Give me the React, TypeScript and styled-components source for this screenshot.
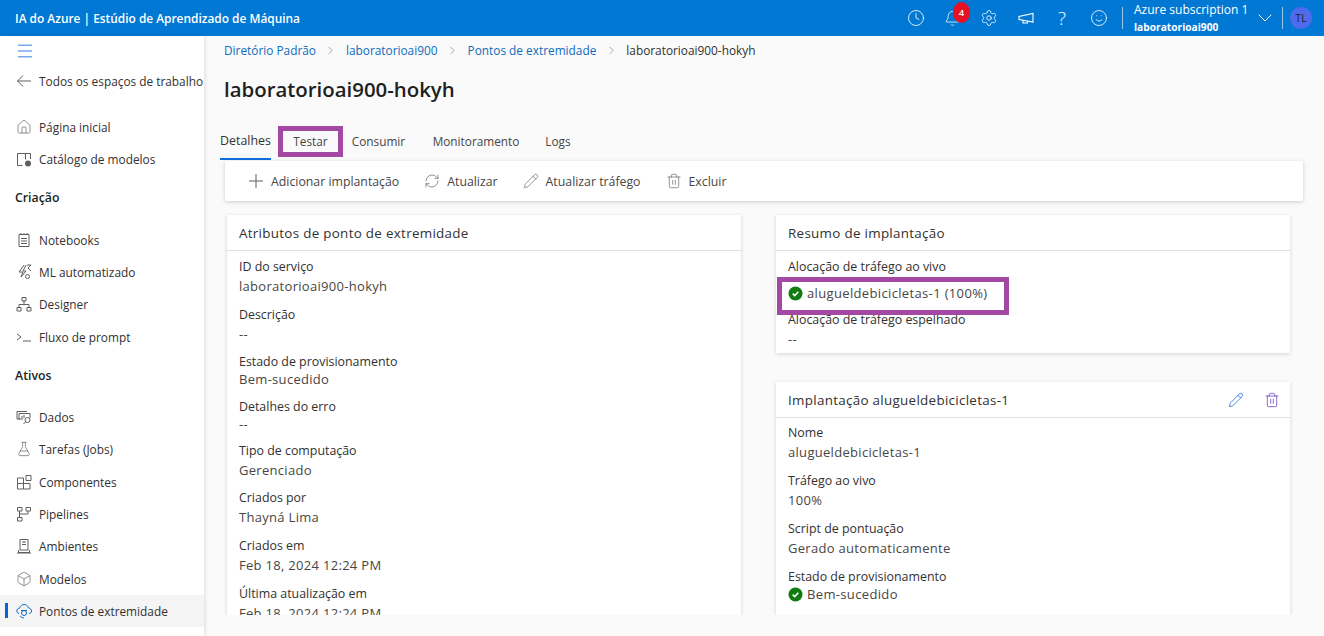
import type { ReactNode } from 'react';
import styled, { createGlobalStyle } from 'styled-components';
import { Bell, ChevronDown, ChevronRight, Clock, Pencil, RefreshCw, Settings, Smile, Trash2, Menu, Home, Box, FlaskConical } from 'lucide-react';

const GlobalStyle = createGlobalStyle`
    html, body {
        margin: 0;
        padding: 0;
        background: #fafafa;
    }
    body {
        font-family: "Open Sans", "Noto Sans", "Liberation Sans", sans-serif;
        font-size: 12px;
        color: #323130;
    }
`;

const Glyph = ({ children }: { children: ReactNode }) => (
    <svg width="16" height="16" viewBox="0 0 16 16" fill="none" stroke="#605e5c" strokeWidth="1">
        {children}
    </svg>
);

const BackIcon = () => (
    <Glyph>
        <path d="M15 8H1.500M7 2.500 1.500 8 7 13.500" />
    </Glyph>
);

const PlusIcon = () => (
    <Glyph>
        <path d="M8 1v14M1 8h14" />
    </Glyph>
);

const MegaphoneIcon = () => (
    <svg width="16" height="16" viewBox="0 0 16 16" fill="none" stroke="#fff" strokeWidth="1.100">
        <path d="M1 6.500v3l14 2.500V3.500zM5 10.500V13h4.500v-1.500" />
    </svg>
);

const CatalogIcon = () => (
    <svg width="16" height="16" viewBox="0 0 16 16" fill="none" stroke="#605e5c">
        <path d="M6.500 14.500h-5v-12h13V8M9.500 2.500v6" />
        <circle cx="12" cy="12.500" r="3" fill="#605e5c" stroke="none" />
    </svg>
);

const NotebookIcon = () => (
    <Glyph>
        <path d="M3 2.500h10v12H3zM5 1v2M8 1v2M11 1v2M5 6.500h6M5 9h6M5 11.500h6" />
    </Glyph>
);

const AutoMlIcon = () => (
    <Glyph>
        <path d="M8 1 3 8h4l-2 5 5-6H7l3-6M11 1h4l-3 3 3 3" />
        <circle cx="11.500" cy="12.500" r="2" />
    </Glyph>
);

const DesignerIcon = () => (
    <Glyph>
        <path d="M6 1.500h4v3.500H6zM1 11.500h4V15H1zM11 11.500h4V15h-4zM8 5v3.500M3 11.500v-3h10v3" />
    </Glyph>
);

const PromptIcon = () => (
    <Glyph>
        <path d="m1 5 4 3-4 3M7 12h8" />
    </Glyph>
);

const DataIcon = () => (
    <Glyph>
        <path d="M4 10H1V2.500h10M3 4.500h11V9M3 4.500V10h4M6 9V7M8 9V6" />
        <circle cx="11.500" cy="11" r="2.500" />
        <path d="m9.500 13-2 2" />
    </Glyph>
);

const ComponentsIcon = () => (
    <Glyph>
        <path d="M1.500 4h6v5.500h-6zM7.500 9.500h6.500V15H7.500zM1.500 9.500h6V15h-6zM10 1.500h5v5h-5z" />
    </Glyph>
);

const PipelinesIcon = () => (
    <Glyph>
        <path d="M1.500 1.500h4.500v3.500H1.500zM10 1.500h4.500v3.500H10zM1.500 11.500h4.500V15H1.500zM3.500 5v6.500M12 5v3H3.500" />
    </Glyph>
);

const EnvIcon = () => (
    <Glyph>
        <path d="M4 1.500h8V12H4zM6 4h4M6 6.500h4M2.500 12v2.500h11V12M1 15h14" />
    </Glyph>
);

const EndpointIcon = () => (
    <svg width="16" height="16" viewBox="0 0 16 16" fill="none" stroke="#0f6cbd">
        <path d="M3 10.500C1 10 .5 8.500 1 7c.4-1.200 1.500-1.800 2.500-1.700C4.200 3 6 1.500 8 1.500c2.300 0 4 1.500 4.500 3.500 1.800.2 3 1.500 3 3 0 1.600-1.200 2.500-2.500 2.500" />
        <circle cx="8" cy="10" r="2.500" />
        <path d="M5 7.500h6M4 13c1 1.300 2.500 2 4 2" />
    </svg>
);

const StatusCheck = () => (
    <svg width="15" height="15" viewBox="0 0 15 15">
        <circle cx="7.500" cy="7.500" r="7" fill="#107c10" />
        <path d="m4.700 7.700 2 1.900 3.600-3.800" fill="none" stroke="#fff" strokeWidth="1.600" />
    </svg>
);

const navCreate = [
    { label: 'Notebooks', icon: <NotebookIcon /> },
    { label: 'ML automatizado', icon: <AutoMlIcon /> },
    { label: 'Designer', icon: <DesignerIcon /> },
    { label: 'Fluxo de prompt', icon: <PromptIcon /> },
];

const navAssets = [
    { label: 'Dados', icon: <DataIcon /> },
    { label: 'Tarefas (Jobs)', icon: <FlaskConical size={16} strokeWidth={1} color="#605e5c" /> },
    { label: 'Componentes', icon: <ComponentsIcon /> },
    { label: 'Pipelines', icon: <PipelinesIcon /> },
    { label: 'Ambientes', icon: <EnvIcon /> },
    { label: 'Modelos', icon: <Box size={16} strokeWidth={1} color="#605e5c" /> },
];

const attributes = [
    { label: 'ID do serviço', value: 'laboratorioai900-hokyh', h: 48 },
    { label: 'Descrição', value: '--', h: 47 },
    { label: 'Estado de provisionamento', value: 'Bem-sucedido', h: 45, tight: true },
    { label: 'Detalhes do erro', value: '--', h: 44, tight: true },
    { label: 'Tipo de computação', value: 'Gerenciado', h: 47 },
    { label: 'Criados por', value: 'Thayná Lima', h: 48 },
    { label: 'Criados em', value: 'Feb 18, 2024 12:24 PM', h: 48 },
    { label: 'Última atualização em', value: 'Feb 18, 2024 12:24 PM', h: 48 },
];

const deployment = [
    { label: 'Nome', value: 'alugueldebicicletas-1' },
    { label: 'Tráfego ao vivo', value: '100%' },
    { label: 'Script de pontuação', value: 'Gerado automaticamente' },
];

const crumbChevron = <ChevronRight size={13} strokeWidth={1} color="#605e5c" />;

function App() {
    return (
        <Page>
            <GlobalStyle />
            <TopBar>
                <Brand>IA do Azure | Estúdio de Aprendizado de Máquina</Brand>
                <TopIcons>
                    <TopIcon><Clock size={18} strokeWidth={1.100} /></TopIcon>
                    <TopIcon>
                        <Bell size={17} strokeWidth={1.100} />
                        <Badge>4</Badge>
                    </TopIcon>
                    <TopIcon><Settings size={18} strokeWidth={1.100} /></TopIcon>
                    <TopIcon><MegaphoneIcon /></TopIcon>
                    <TopIcon><Help>?</Help></TopIcon>
                    <TopIcon><Smile size={18} strokeWidth={1.100} /></TopIcon>
                </TopIcons>
                <Account>
                    <AccountName>Azure subscription 1</AccountName>
                    <AccountSub>laboratorioai900</AccountSub>
                </Account>
                <AccountChevron><ChevronDown size={24} strokeWidth={1} /></AccountChevron>
                <Avatar>TL</Avatar>
            </TopBar>
            <Body>
                <Sidebar>
                    <MenuRow><Menu size={20} strokeWidth={1} color="#0b62e0" /></MenuRow>
                    <NavRow><BackIcon />Todos os espaços de trabalho</NavRow>
                    <Spacer $h={13.3} />
                    <NavRow>
                        <Home size={16} strokeWidth={1} color="#605e5c" />
                        Página inicial
                    </NavRow>
                    <NavRow><CatalogIcon />Catálogo de modelos</NavRow>
                    <Section>Criação</Section>
                    {navCreate.map(item => (
                        <NavRow key={item.label}>{item.icon}{item.label}</NavRow>
                    ))}
                    <Section>Ativos</Section>
                    {navAssets.map(item => (
                        <NavRow key={item.label}>{item.icon}{item.label}</NavRow>
                    ))}
                    <NavRow $active><EndpointIcon />Pontos de extremidade</NavRow>
                </Sidebar>
                <Main>
                    <Breadcrumb>
                        <Crumb>Diretório Padrão</Crumb>
                        {crumbChevron}
                        <Crumb>laboratorioai900</Crumb>
                        {crumbChevron}
                        <Crumb>Pontos de extremidade</Crumb>
                        {crumbChevron}
                        <span>laboratorioai900-hokyh</span>
                    </Breadcrumb>
                    <Title>laboratorioai900-hokyh</Title>
                    <Tabs>
                        <Tab $active $w={51}>Detalhes</Tab>
                        <Tab $w={65} $ml={7} $boxed>Testar</Tab>
                        <Tab $w={53} $ml={9}>Consumir</Tab>
                        <Tab $w={88} $ml={27}>Monitoramento</Tab>
                        <Tab $w={26} $ml={25}>Logs</Tab>
                    </Tabs>
                    <Toolbar>
                        <Action><PlusIcon />Adicionar implantação</Action>
                        <Action><RefreshCw size={16} strokeWidth={1} color="#605e5c" />Atualizar</Action>
                        <Action><Pencil size={16} strokeWidth={1} color="#605e5c" />Atualizar tráfego</Action>
                        <Action><Trash2 size={16} strokeWidth={1} color="#605e5c" />Excluir</Action>
                    </Toolbar>
                    <Columns>
                        <Card>
                            <CardHead>Atributos de ponto de extremidade</CardHead>
                            <CardBody>
                                {attributes.map(f => (
                                    <Field key={f.label} $h={f.h}>
                                        <Label>{f.label}</Label>
                                        <Value $tight={f.tight}>{f.value}</Value>
                                    </Field>
                                ))}
                            </CardBody>
                        </Card>
                        <RightColumn>
                            <Card>
                                <CardHead>Resumo de implantação</CardHead>
                                <CardBody $pb={3}>
                                    <Field $h={53}>
                                        <Label>Alocação de tráfego ao vivo</Label>
                                        <StatusValue $boxed><StatusCheck />alugueldebicicletas-1 (100%)</StatusValue>
                                    </Field>
                                    <Field $h={40}>
                                        <Label>Alocação de tráfego espelhado</Label>
                                        <Value>--</Value>
                                    </Field>
                                </CardBody>
                            </Card>
                            <Card $fill>
                                <CardHead>
                                    Implantação alugueldebicicletas-1
                                    <HeadActions>
                                        <Pencil size={16} strokeWidth={1.200} color="#1a6cdc" />
                                        <Trash2 size={16} strokeWidth={1.200} color="#6a45c8" />
                                    </HeadActions>
                                </CardHead>
                                <CardBody $pt={5}>
                                    {deployment.map(f => (
                                        <Field key={f.label} $h={48}>
                                            <Label>{f.label}</Label>
                                            <Value>{f.value}</Value>
                                        </Field>
                                    ))}
                                    <Field $h={48}>
                                        <Label>Estado de provisionamento</Label>
                                        <StatusValue $tight><StatusCheck />Bem-sucedido</StatusValue>
                                    </Field>
                                </CardBody>
                            </Card>
                        </RightColumn>
                    </Columns>
                </Main>
            </Body>
        </Page>
    );
}

const Page = styled.div`
    width: 1324px;
    height: 636px;
    overflow: hidden;
    display: flex;
    flex-direction: column;
`;

const TopBar = styled.header`
    height: 36px;
    flex: none;
    background: #0078d4;
    color: #fff;
    display: flex;
    align-items: center;
    padding: 0 12px 0 15px;
`;

const Brand = styled.div`
    font-size: 11.900px;
    font-weight: 600;
    flex: 1;
`;

const TopIcons = styled.div`
    display: flex;
    align-items: center;
    margin-right: 5px;
`;

const TopIcon = styled.div`
    position: relative;
    width: 36.600px;
    height: 36px;
    display: flex;
    align-items: center;
    justify-content: center;
`;

const Help = styled.span`
    font-size: 19px;
    font-weight: 300;
`;

const Badge = styled.span`
    position: absolute;
    top: 2px;
    left: 19px;
    width: 17px;
    height: 21px;
    border-radius: 50%;
    background: #e81123;
    font-size: 9.500px;
    font-weight: 600;
    display: flex;
    align-items: center;
    justify-content: center;
`;

const Account = styled.div`
    width: 133px;
    height: 22px;
    box-sizing: border-box;
    border-left: 1px solid #9cc8ea;
    padding-left: 11px;
    display: flex;
    flex-direction: column;
    justify-content: center;
`;

const AccountName = styled.div`
    font-size: 12px;
    line-height: 16px;
    margin-top: 1px;
    white-space: nowrap;
`;

const AccountSub = styled.div`
    font-size: 10.200px;
    font-weight: 700;
    line-height: 16px;
    margin-top: 1px;
`;

const AccountChevron = styled.div`
    width: 20px;
    height: 24px;
    display: flex;
    justify-content: center;
    svg {
        flex: none;
    }
`;

const Avatar = styled.div`
    position: relative;
    margin-left: 15px;
    width: 22px;
    height: 22px;
    border-radius: 50%;
    background: #4f6bed;
    color: #201f1e;
    font-size: 10.500px;
    display: flex;
    align-items: center;
    justify-content: center;
    &::before {
        content: '';
        position: absolute;
        left: -8px;
        top: 0;
        width: 1px;
        height: 22px;
        background: #9cc8ea;
    }
`;

const Body = styled.div`
    flex: 1;
    display: flex;
    min-height: 0;
`;

const Sidebar = styled.nav`
    width: 204px;
    flex: none;
    background: #fff;
    box-shadow: 1px 0 4px rgba(0, 0, 0, 0.12);
    z-index: 1;
    overflow: hidden;
`;

const MenuRow = styled.div`
    height: 29px;
    padding-left: 15px;
    display: flex;
    align-items: center;
`;

const NavRow = styled.div<{ $active?: boolean }>`
    position: relative;
    height: 32.300px;
    display: flex;
    align-items: center;
    gap: 7px;
    padding-left: 16px;
    white-space: nowrap;
    font-size: 11.850px;
    color: #323130;
    background: ${p => (p.$active ? '#f5f5f5' : 'transparent')};
    &::before {
        content: '';
        display: ${p => (p.$active ? 'block' : 'none')};
        position: absolute;
        left: 5px;
        top: 8px;
        width: 3px;
        height: 15px;
        background: #0b62d6;
    }
    svg {
        flex: none;
    }
`;

const Spacer = styled.div<{ $h: number }>`
    height: ${p => p.$h}px;
`;

const Section = styled.div`
    height: 48.300px;
    box-sizing: border-box;
    padding: 0 0 3px 15px;
    font-size: 12.300px;
    font-weight: 600;
    color: #201f1e;
    display: flex;
    align-items: center;
`;

const Main = styled.main`
    flex: 1;
    min-width: 0;
    background: #fafafa;
    padding-left: 16px;
`;

const Breadcrumb = styled.div`
    height: 28px;
    display: flex;
    align-items: center;
    gap: 8.500px;
    padding-left: 4px;
    font-size: 11.850px;
`;

const Crumb = styled.span`
    color: #0f6cbd;
`;

const Title = styled.h1`
    margin: 0;
    height: 52px;
    padding-left: 4px;
    font-size: 20.400px;
    font-weight: 600;
    line-height: 50px;
    color: #201f1e;
`;

const Tabs = styled.div`
    height: 45px;
    display: flex;
    align-items: flex-start;
    padding-top: 10px;
    box-sizing: border-box;
`;

const Tab = styled.div<{ $active?: boolean; $w: number; $ml?: number; $boxed?: boolean }>`
    width: ${p => p.$w}px;
    height: ${p => (p.$boxed ? 31 : 34)}px;
    margin-left: ${p => p.$ml ?? 0}px;
    box-sizing: border-box;
    padding-bottom: ${p => (p.$boxed ? 2 : 3)}px;
    display: flex;
    align-items: center;
    justify-content: center;
    font-size: ${p => (p.$active ? 12.400 : 11.800)}px;
    color: ${p => (p.$active ? '#323130' : '#484644')};
    border-bottom: ${p => (p.$boxed ? 'none' : `2px solid ${p.$active ? '#0f6cdc' : 'transparent'}`)};
    ${p => p.$boxed && `
        border: 5px solid #a349a4;
    `}
`;

const Toolbar = styled.div`
    width: 1078px;
    height: 40px;
    margin-left: 5px;
    background: #fff;
    border-radius: 2px;
    box-shadow: 0 1px 4px rgba(0, 0, 0, 0.18);
    display: flex;
    align-items: center;
    gap: 25px;
    padding-left: 23px;
    box-sizing: border-box;
`;

const Action = styled.div`
    display: flex;
    align-items: center;
    gap: 7px;
    font-size: 12.300px;
    color: #484644;
`;

const Columns = styled.div`
    margin-top: 9px;
    margin-left: 2px;
    padding: 5px 5px 0;
    display: flex;
    gap: 35px;
    height: 400px;
    overflow: hidden;
`;

const RightColumn = styled.div`
    display: flex;
    flex-direction: column;
    gap: 29px;
`;

const Card = styled.section<{ $fill?: boolean }>`
    width: 514px;
    flex: ${p => (p.$fill ? '1' : 'none')};
    background: #fff;
    box-shadow: 0 1px 4px rgba(0, 0, 0, 0.16);
`;

const CardHead = styled.h2`
    margin: 0;
    height: 36px;
    box-sizing: border-box;
    padding: 1px 12px 0;
    display: flex;
    align-items: center;
    justify-content: space-between;
    border-bottom: 1px solid #e1dfdd;
    font-size: 13.400px;
    letter-spacing: 0.300px;
    font-weight: 500;
    color: #323130;
`;

const HeadActions = styled.div`
    display: flex;
    gap: 20px;
    margin-right: -2px;
`;

const CardBody = styled.div<{ $pt?: number; $pb?: number }>`
    padding: ${p => p.$pt ?? 6}px 12px ${p => p.$pb ?? 0}px;
`;

const Field = styled.div<{ $h: number }>`
    height: ${p => p.$h}px;
`;

const Label = styled.div`
    font-size: 12.400px;
    line-height: 20px;
    color: #323130;
`;

const Value = styled.div<{ $tight?: boolean }>`
    font-size: 13px;
    letter-spacing: 0.300px;
    line-height: 20px;
    margin-top: ${p => (p.$tight ? '-3px' : '-1px')};
    color: #484644;
`;

const StatusValue = styled.div<{ $boxed?: boolean; $tight?: boolean }>`
    position: relative;
    display: flex;
    align-items: center;
    gap: 4px;
    font-size: 13px;
    letter-spacing: 0.350px;
    line-height: 20px;
    margin-top: ${p => (p.$boxed ? '6px' : p.$tight ? '-3px' : '0')};
    color: #484644;
    ${p => p.$boxed && `
        &::after {
            content: '';
            position: absolute;
            left: -11px;
            top: -6px;
            width: 232px;
            height: 38px;
            box-sizing: border-box;
            border: 5px solid #a349a4;
        }
    `}
`;

export default App;
